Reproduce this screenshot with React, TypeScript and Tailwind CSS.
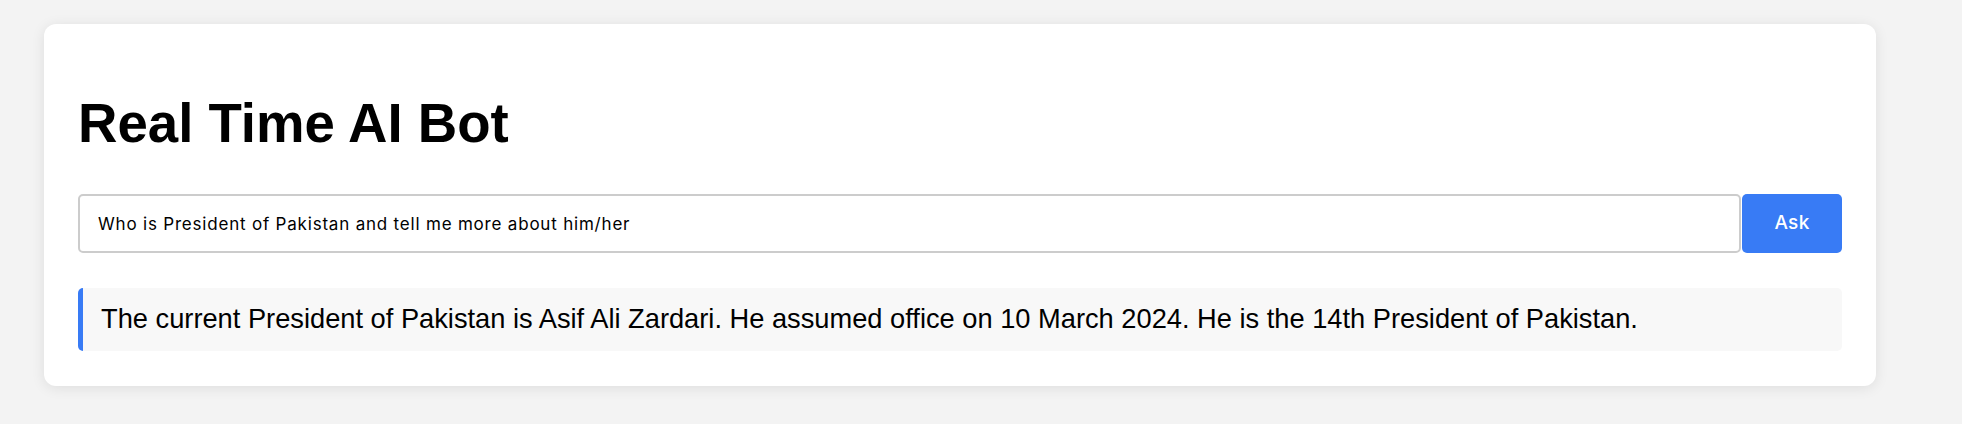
import React from "react";

export default function App() {
  return (
    <div className="min-h-[424px] w-full bg-[#f3f3f3] pt-[24px] pl-[44px]">
      <div className="w-[1832px] rounded-[12px] bg-white px-[34px] pt-[34px] pb-[35px] shadow-[0_2px_14px_rgba(0,0,0,0.09)]">
        <h1 className="mt-[35px] mb-[39px] font-['Liberation_Sans',Arial,sans-serif] text-[54.6px] leading-[62px] font-bold text-black">
          Real Time AI Bot
        </h1>
        <div className="flex h-[59px] w-full">
          <input
            className="h-full flex-1 rounded-[5px] border-2 border-[#cccccc] bg-white pl-[18px] font-['Inter','Noto_Sans',sans-serif] text-[17px] tracking-[0.8px] text-black outline-none"
            defaultValue="Who is President of Pakistan and tell me more about him/her"
          />
          <button className="ml-px h-full w-[100px] rounded-[5px] bg-[#387bf5] font-['Inter','Noto_Sans',sans-serif] text-[19px] font-medium tracking-[0.3px] text-white">
            Ask
          </button>
        </div>
        <div className="mt-[35px] rounded-[5px] border-l-[5px] border-[#387bf5] bg-[#f8f8f8] pt-[15px] pb-[16px] pl-[18px] font-['Liberation_Sans',Arial,sans-serif] text-[27.25px] leading-[32px] text-black">
          The current President of Pakistan is Asif Ali Zardari. He assumed office on 10 March 2024. He is the 14th President of Pakistan.
        </div>
      </div>
    </div>
  );
}
